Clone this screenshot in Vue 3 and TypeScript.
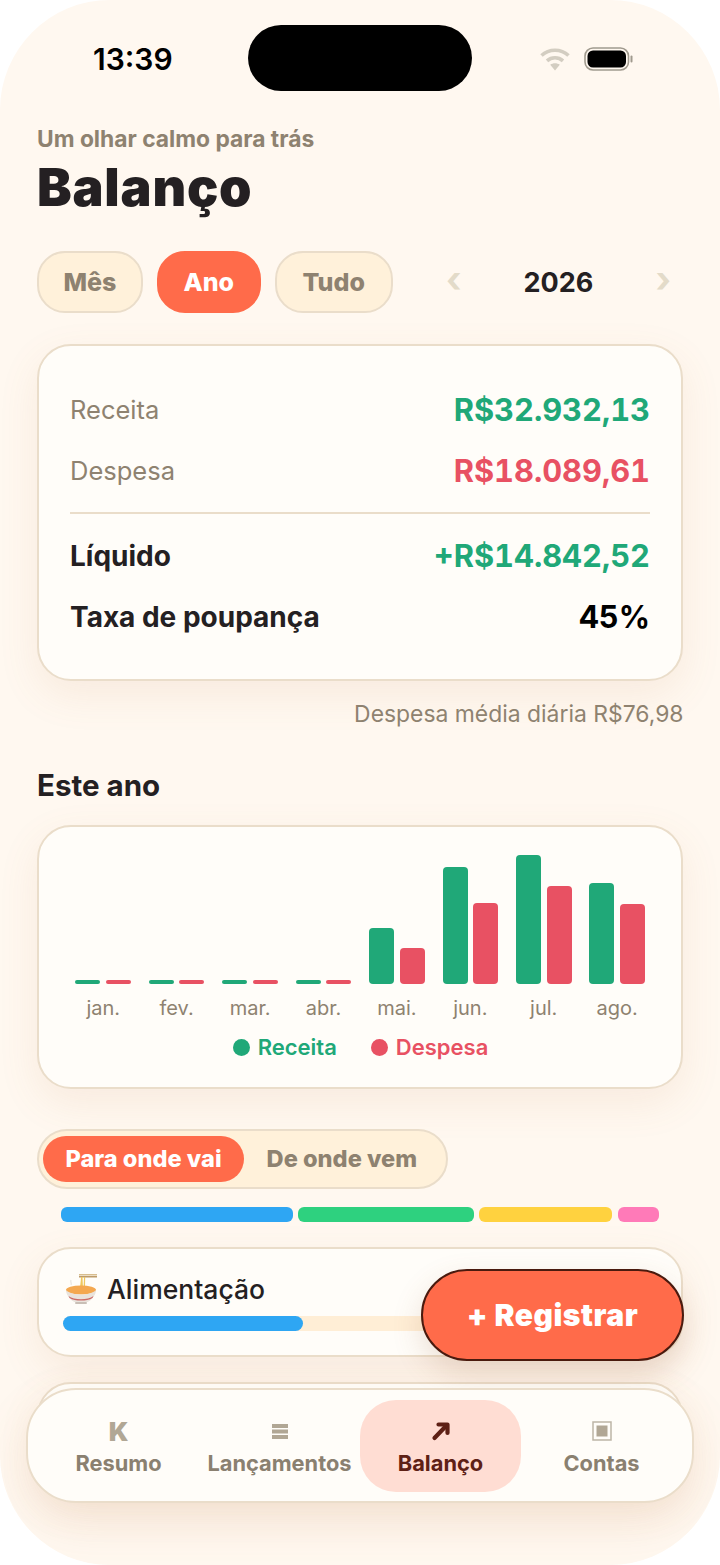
<script setup lang="ts">
const summary = [
  { label: 'Receita', value: 'R$32.932,13', tone: 'green' },
  { label: 'Despesa', value: 'R$18.089,61', tone: 'red' },
]

const months = [
  { name: 'jan.', inc: 4, exp: 4 },
  { name: 'fev.', inc: 4, exp: 4 },
  { name: 'mar.', inc: 4, exp: 4 },
  { name: 'abr.', inc: 4, exp: 4 },
  { name: 'mai.', inc: 56, exp: 36 },
  { name: 'jun.', inc: 117, exp: 81 },
  { name: 'jul.', inc: 129, exp: 98 },
  { name: 'ago.', inc: 101, exp: 80 },
]

const stack = [
  { w: 232, color: '#2ea6f3' },
  { w: 175.2, color: '#2ed17f' },
  { w: 133.5, color: '#ffd23f' },
  { w: 41, color: '#ff7ab8' },
]

const tabs = ['Resumo', 'Lançamentos', 'Balanço', 'Contas']
</script>

<template>
  <div class="phone">
    <div class="status">
      <span class="time">13:39</span>
      <div class="status-icons">
        <svg width="30" height="24" viewBox="0 0 30 24" fill="none" stroke="#d3cdc1" stroke-width="3.6">
          <path d="M1.500 8.500C9 1.500 21 1.500 28.500 8.500" />
          <path d="M7 13.800C11.500 9.800 18.500 9.800 23 13.800" />
          <path d="M15 23.500l-4.800-5.800c2.800-2 6.800-2 9.600 0z" fill="#d3cdc1" stroke="none" />
        </svg>
        <svg width="49" height="24" viewBox="0 0 49 24">
          <rect x="1" y="1" width="43.500" height="22" rx="8" fill="none" stroke="#a09a8e" stroke-width="1.600" />
          <rect x="3.500" y="3.500" width="38.500" height="17" rx="5.500" fill="#000" />
          <rect x="46.500" y="8.500" width="2" height="7" rx="1" fill="#a09a8e" />
        </svg>
      </div>
    </div>
    <div class="island"></div>

    <main class="content">
      <p class="eyebrow">Um olhar calmo para trás</p>
      <h1 class="title">Balanço</h1>

      <div class="controls">
        <button class="pill">Mês</button>
        <button class="pill active">Ano</button>
        <button class="pill wide">Tudo</button>
        <div class="year">
          <span class="chev">‹</span>
          <span class="year-num">2026</span>
          <span class="chev">›</span>
        </div>
      </div>

      <section class="card totals">
        <div v-for="row in summary" :key="row.label" class="row">
          <span class="row-label">{{ row.label }}</span>
          <span :class="['row-value', row.tone]">{{ row.value }}</span>
        </div>
        <div class="divider"></div>
        <div class="row">
          <span class="row-label strong">Líquido</span>
          <span class="row-value green">+R$14.842,52</span>
        </div>
        <div class="row">
          <span class="row-label strong">Taxa de poupança</span>
          <span class="row-value black">45%</span>
        </div>
      </section>
      <p class="note">Despesa média diária R$76,98</p>

      <h2 class="section">Este ano</h2>
      <section class="card chart">
        <div class="bars">
          <div v-for="m in months" :key="m.name" class="month">
            <div class="pair">
              <span class="bar inc" :style="{ height: m.inc + 'px' }"></span>
              <span class="bar exp" :style="{ height: m.exp + 'px' }"></span>
            </div>
            <span class="month-name">{{ m.name }}</span>
          </div>
        </div>
        <div class="legend">
          <span class="legend-item green"><i class="dot inc"></i>Receita</span>
          <span class="legend-item red"><i class="dot exp"></i>Despesa</span>
        </div>
      </section>

      <div class="segment">
        <span class="seg on">Para onde vai</span>
        <span class="seg">De onde vem</span>
      </div>

      <div class="stack">
        <span v-for="s in stack" :key="s.color" :style="{ width: s.w + 'px', background: s.color }"></span>
      </div>

      <section class="card category">
        <div class="cat-head">
          <svg class="bowl" width="36" height="34" viewBox="0 0 36 34">
            <path d="M9 8c-1 2 1 3 0 5" fill="none" stroke="#e8e4de" stroke-width="1.200" />
            <rect x="17" y="2" width="18" height="1.500" fill="#d8bd8e" />
            <rect x="17" y="4" width="18" height="1.500" fill="#bd9b6a" />
            <path d="M19 5h1.500c0 4 .5 8 .5 12h-3c0-4 1-8 1-12zM22 5h1.200c0 4-.2 8-.2 12h-1.500c0-4 .5-8 .5-12z" fill="#efc75e" />
            <ellipse cx="19" cy="18" rx="15" ry="4.500" fill="#f4a850" />
            <path d="M4 18c0 3 1.500 6 4 8.500 1 1.500 2.500 2.500 4.500 3.500h13c2-1 3.500-2 4.500-3.500 2.500-2.500 4-5.500 4-8.500-2 2.500-8 4.500-15 4.500S6 20.500 4 18z" fill="#e9e3dc" />
            <path d="M6.500 24c3 2.200 7.500 3.200 12.500 3.200S28.500 26.200 31.500 24l-1 2c-3 1.800-7 2.600-11.500 2.600S10.500 27.800 7.500 26z" fill="#cc6a68" />
            <rect x="13" y="30" width="12" height="2" rx="1" fill="#c9bfb6" />
          </svg>
          <span>Alimentação</span>
        </div>
        <div class="track"><div class="fill"></div></div>
      </section>

      <section class="card next"></section>
    </main>

    <button class="fab">+ Registrar</button>

    <nav class="tabbar">
      <div v-for="(tab, i) in tabs" :key="tab" :class="['tab', { current: i === 2 }]">
        <span class="tab-icon">
          <span v-if="i === 0" class="k">K</span>
          <svg v-else-if="i === 1" width="16" height="15" viewBox="0 0 16 15" fill="#b1a795">
            <rect y="0" width="16" height="4" />
            <rect y="5.500" width="16" height="4" />
            <rect y="11" width="16" height="4" />
          </svg>
          <svg v-else-if="i === 2" width="20" height="20" viewBox="0 0 20 20" fill="none" stroke="#5e2015" stroke-width="4.200" stroke-linecap="round" stroke-linejoin="round">
            <path d="M3.500 17L15 5" />
            <path d="M7.500 3.500h9V12" />
          </svg>
          <svg v-else width="20" height="20" viewBox="0 0 20 20">
            <rect x="1" y="1" width="18" height="18" fill="none" stroke="#bdb5a6" stroke-width="1.500" />
            <rect x="4.500" y="4.500" width="11" height="11" fill="#b1a795" />
          </svg>
        </span>
        <span class="tab-label">{{ tab }}</span>
      </div>
    </nav>
  </div>
</template>

<style>
html,
body {
  margin: 0;
  background: #fff;
}
</style>

<style scoped>
.phone {
  position: relative;
  width: 720px;
  height: 1565px;
  overflow: hidden;
  border-radius: 110px;
  background: #fff8f0;
  font-family: Inter, "Noto Sans", sans-serif;
  color: #242022;
}

.status {
  display: flex;
  align-items: center;
  justify-content: space-between;
  height: 117px;
  padding: 0 87px 0 93px;
}

.time {
  font-size: 30px;
  font-weight: 600;
  color: #000;
}

.status-icons {
  display: flex;
  align-items: center;
  gap: 14px;
}

.island {
  position: absolute;
  top: 25px;
  left: 248px;
  width: 224px;
  height: 66px;
  border-radius: 33px;
  background: #000;
}

.content {
  padding: 0 37px;
}

.eyebrow {
  margin: 8px 0 0;
  font-size: 22.800px;
  font-weight: 700;
  line-height: 28px;
  color: #8e8270;
}

.title {
  margin: 4px 0 0;
  font-size: 52px;
  font-weight: 900;
  line-height: 62px;
  letter-spacing: 0.8px;
}

.controls {
  display: flex;
  align-items: center;
  gap: 14px;
  margin-top: 32px;
}

.pill {
  height: 62px;
  padding: 0 24.500px;
  border: 2px solid #eaddca;
  border-radius: 28px;
  background: #fff1da;
  font: 800 25px Inter, sans-serif;
  color: #8e8270;
}

.pill.wide {
  padding: 0 26px;
}

.pill.active {
  border-color: #ff6b4a;
  background: #ff6b4a;
  color: #fff;
}

.year {
  display: flex;
  flex: 1;
  align-items: center;
  justify-content: space-between;
  padding: 0 12px 0 39px;
}

.chev {
  margin-top: -6px;
  font-size: 36px;
  font-weight: 700;
  line-height: 36px;
  color: #e3dbc9;
}

.year-num {
  font-size: 27px;
  font-weight: 700;
}

.card {
  box-sizing: border-box;
  border: 2px solid #eaddca;
  border-radius: 34px;
  background: #fffdf9;
  box-shadow: 0 14px 40px rgba(190, 120, 70, 0.1);
}

.totals {
  height: 337px;
  margin-top: 31px;
  padding: 33px 31px 0;
}

.row {
  display: flex;
  align-items: center;
  justify-content: space-between;
  height: 61px;
}

.row-label {
  font-size: 25.500px;
  color: #8e8270;
}

.row-label.strong {
  font-size: 28px;
  font-weight: 700;
  color: #242022;
}

.row-value {
  font-size: 30.800px;
  font-weight: 700;
  font-variant-numeric: tabular-nums;
}

.green {
  color: #20a878;
}

.red {
  color: #e85163;
}

.black {
  color: #000;
}

.divider {
  height: 2px;
  margin: 11px 0;
  background: #eaddca;
}

.note {
  margin: 19px -0.5px 0 0;
  font-size: 22.900px;
  line-height: 28px;
  text-align: right;
  color: #8e8270;
}

.section {
  margin: 39px 0 0;
  font-size: 29.500px;
  font-weight: 700;
  line-height: 36px;
}

.chart {
  height: 264px;
  margin-top: 22px;
  padding: 0 36.500px;
}

.bars {
  display: flex;
  height: 194px;
}

.month {
  display: flex;
  flex: none;
  flex-direction: column;
  align-items: center;
  width: 73.430px;
}

.pair {
  display: flex;
  flex: none;
  align-items: flex-end;
  gap: 5.500px;
  height: 157px;
  margin-right: 18px;
}

.bar {
  display: block;
  width: 25px;
  border-radius: 4px;
}

.inc {
  background: #20a878;
}

.exp {
  background: #e85163;
}

.month-name {
  margin: 11px 18px 0 0;
  font-size: 20px;
  line-height: 26px;
  color: #8e8270;
}

.legend {
  display: flex;
  justify-content: center;
  gap: 34px;
  margin-top: 12px;
  padding-left: 1px;
}

.legend-item {
  display: flex;
  align-items: center;
  gap: 8px;
  font-size: 22px;
  font-weight: 600;
  line-height: 28px;
}

.dot {
  width: 17px;
  height: 17px;
  border-radius: 50%;
}

.segment {
  display: flex;
  align-items: center;
  box-sizing: border-box;
  width: 411px;
  height: 60px;
  margin-top: 40px;
  padding: 0 4px;
  border: 2px solid #eaddca;
  border-radius: 30px;
  background: #fff1da;
}

.seg {
  padding: 0 22.500px;
  font-size: 23.600px;
  font-weight: 800;
  line-height: 46px;
  color: #8e8270;
}

.seg.on {
  border-radius: 23px;
  background: #ff6b4a;
  color: #fff;
}

.stack {
  display: flex;
  gap: 5.400px;
  margin: 18px 0 0 24px;
}

.stack span {
  height: 15px;
  border-radius: 6px;
}

.category {
  height: 110px;
  margin-top: 25px;
  padding: 22px 24px 0;
}

.cat-head {
  display: flex;
  align-items: center;
  gap: 9px;
  margin-left: -1px;
  font-size: 26.500px;
  font-weight: 500;
  line-height: 36px;
}

.track {
  height: 15px;
  margin-top: 9px;
  border-radius: 8px;
  background: #ffeed6;
}

.fill {
  width: 240px;
  height: 15px;
  border-radius: 8px;
  background: #2ea6f3;
}

.next {
  height: 111px;
  margin-top: 25px;
}

.fab {
  position: absolute;
  top: 1269px;
  left: 421px;
  width: 263px;
  height: 92px;
  border: 2px solid #4a1a0e;
  border-radius: 46px;
  background: #ff6b4a;
  box-shadow: 0 12px 30px rgba(150, 90, 50, 0.18);
  font: 900 30px Inter, sans-serif;
  letter-spacing: 0.5px;
  color: #fff;
}

.tabbar {
  position: absolute;
  top: 1388px;
  left: 26px;
  display: flex;
  box-sizing: border-box;
  width: 668px;
  height: 115px;
  padding: 10px 10px 9px;
  border: 2px solid #eaddca;
  border-radius: 50px;
  background: #fffdf9;
  box-shadow: 0 20px 50px rgba(190, 120, 70, 0.13);
}

.tab {
  display: flex;
  flex: none;
  flex-direction: column;
  align-items: center;
  justify-content: center;
  gap: 4px;
  width: 161px;
  border-radius: 36px;
  color: #8a8070;
}

.tab.current {
  background: #ffddd3;
  color: #5e2015;
}

.tab-icon {
  display: flex;
  align-items: center;
  justify-content: center;
  height: 28px;
  margin-top: 2px;
}

.k {
  font-size: 26px;
  font-weight: 900;
  color: #b1a795;
}

.tab-label {
  font-size: 21.800px;
  font-weight: 700;
  line-height: 28px;
}
</style>
